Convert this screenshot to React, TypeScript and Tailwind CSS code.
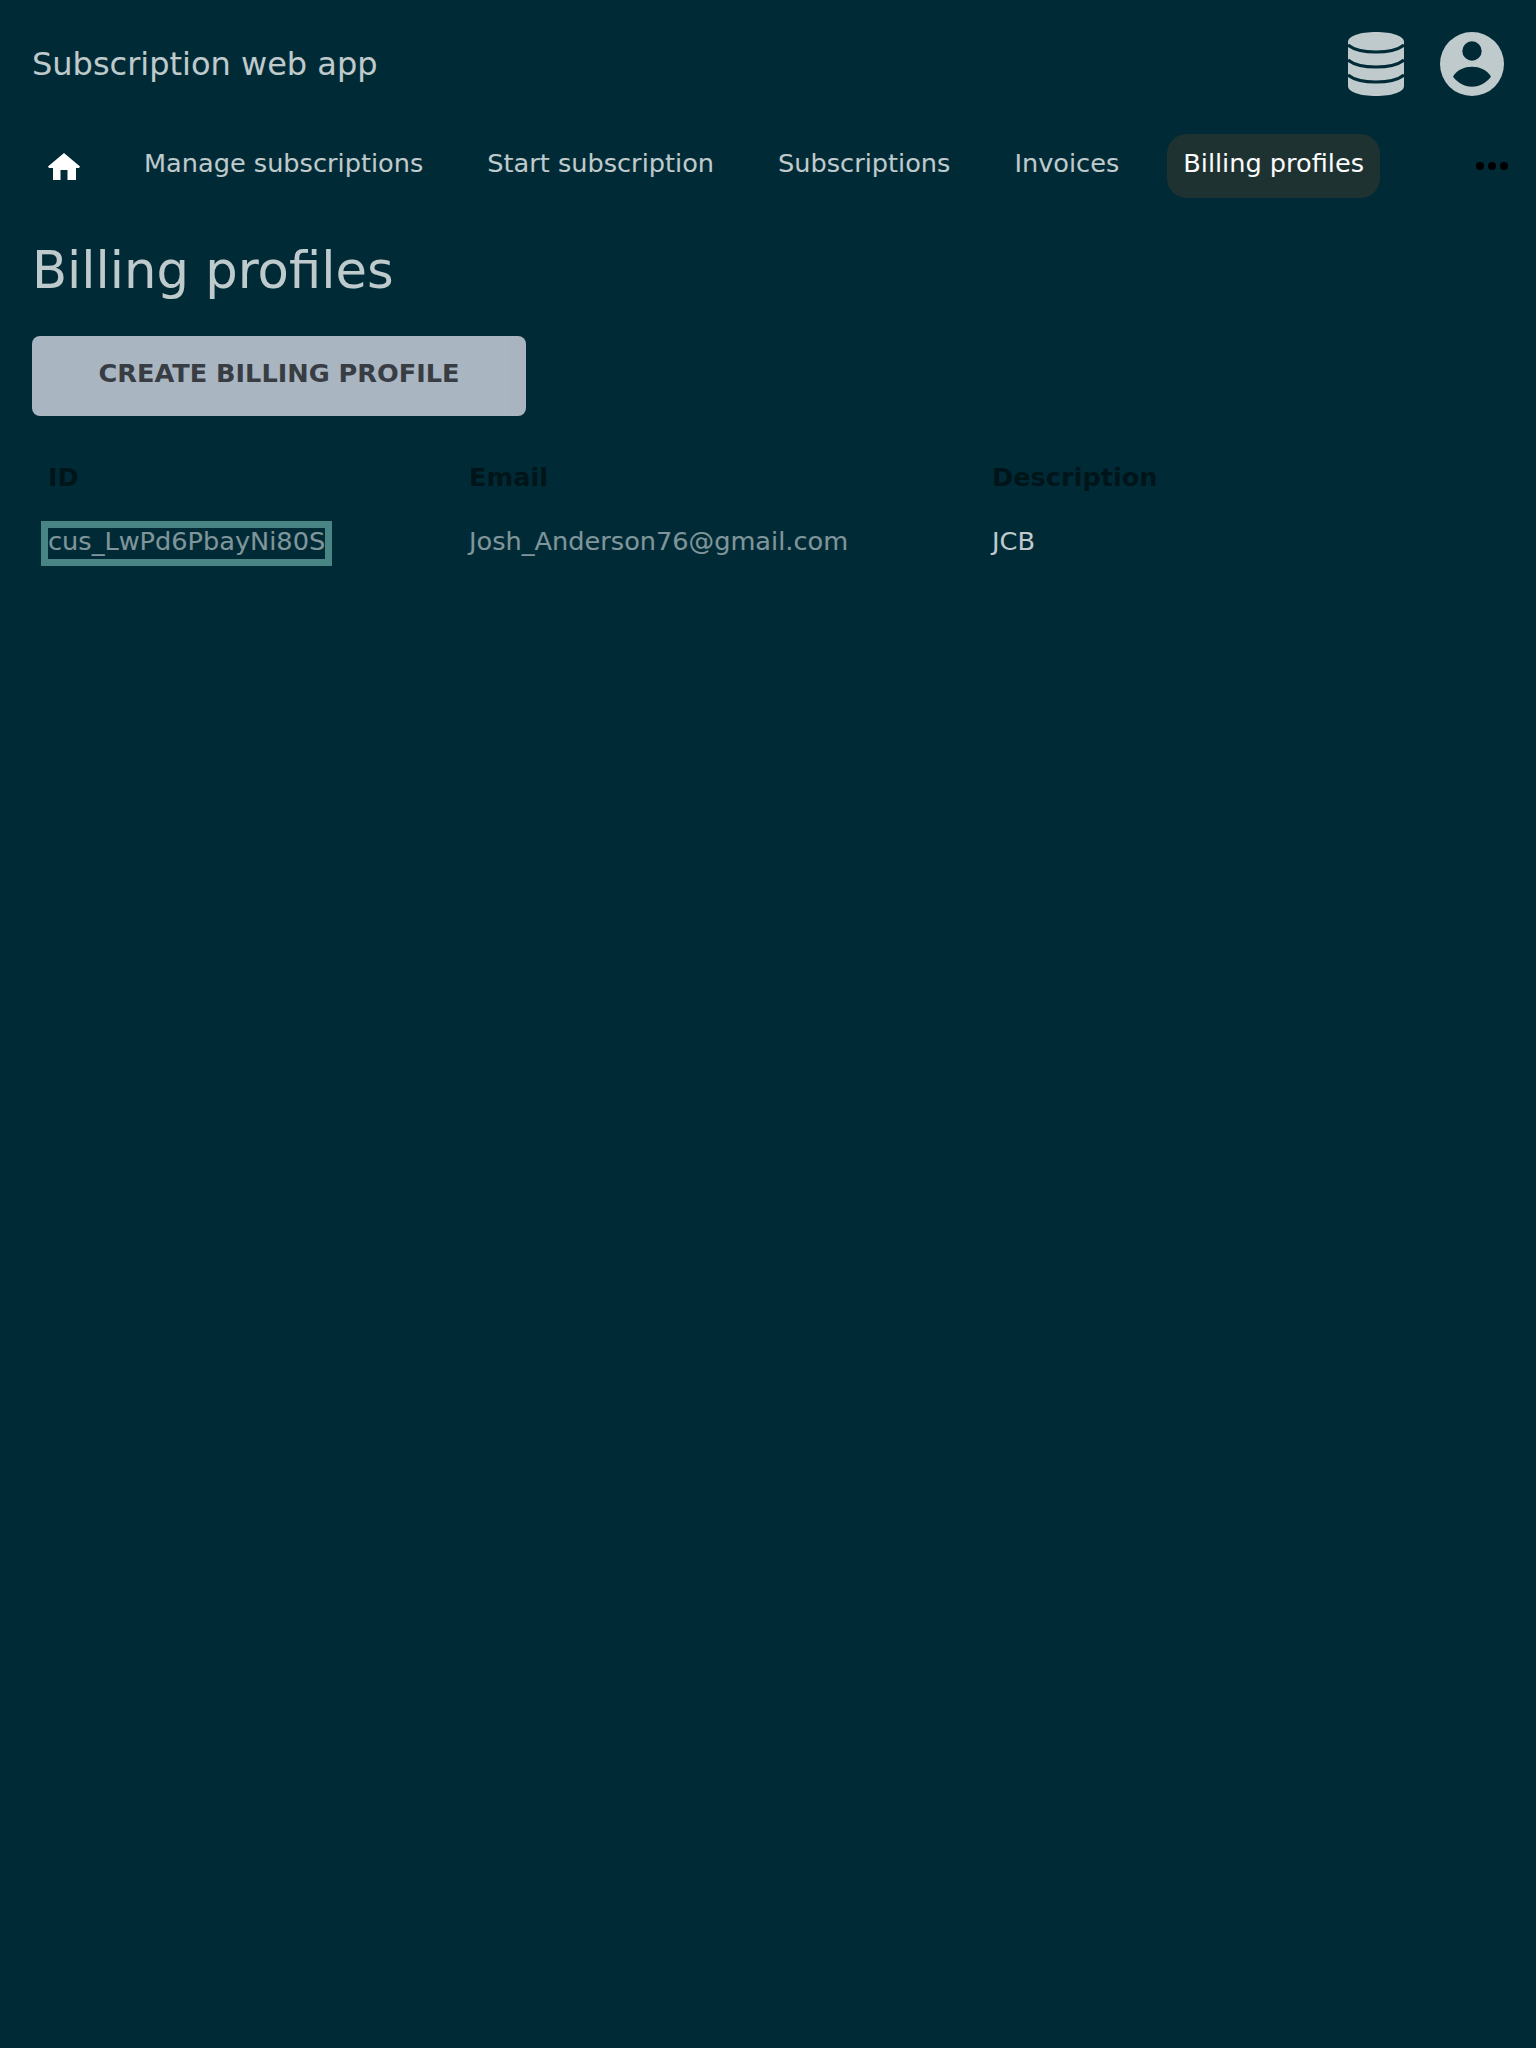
import React from "react";

const navItems = ["Manage subscriptions", "Start subscription", "Subscriptions", "Invoices"];

const HomeIcon = () => (
  <svg viewBox="0 0 32 27" className="w-8 h-[27px] fill-white">
    <path d="M16 0 L32 13.500 L31 15 H28 V27 H19.500 V17 H12.500 V27 H5 V15 H1 L0 13.500 Z" />
  </svg>
);

const DatabaseIcon = () => (
  <svg viewBox="0 0 56 64" className="w-14 h-16">
    <path fill="#bfcacc" d="M0 10C0 4 12 0 28 0s28 4 28 10v44c0 6-12 10-28 10S0 60 0 54Z" />
    <g fill="none" stroke="#002b36" strokeWidth="3">
      <path d="M0 13c6 5 16 7 28 7s22-2 28-7" />
      <path d="M0 28c6 5 16 7 28 7s22-2 28-7" />
      <path d="M0 43c6 5 16 7 28 7s22-2 28-7" />
    </g>
  </svg>
);

const PersonIcon = () => (
  <svg viewBox="0 0 64 64" className="w-16 h-16">
    <path
      fill="#bfcacc"
      fillRule="evenodd"
      d="M32 0a32 32 0 1 0 0 64a32 32 0 1 0 0-64ZM32 9.300a9.700 9.700 0 1 1 0 19.400a9.700 9.700 0 1 1 0-19.400ZM13 44.500C17 38 24 34.700 32 34.700s15 3.300 19 9.800C47 50.500 40 54.700 32 54.700s-15-4.200-19-10.200Z"
    />
  </svg>
);

export default function App() {
  return (
    <div className="min-h-[2048px] bg-[#002b36] text-white font-['DejaVu_Sans',sans-serif]">
      <header className="flex items-center justify-between h-[128px] px-8">
        <h2 className="text-[32px] opacity-75">Subscription web app</h2>
        <div className="flex items-center gap-9">
          <DatabaseIcon />
          <PersonIcon />
        </div>
      </header>

      <nav className="flex items-center h-[76px] pl-12 pr-7">
        <HomeIcon />
        <ul className="flex items-center gap-8 ml-12">
          {navItems.map((item) => (
            <li key={item} className="px-4 pt-[13px] pb-[19px] text-[25.6px] leading-8">
              <span className="opacity-75">{item}</span>
            </li>
          ))}
          <li className="px-4 pt-[13px] pb-[19px] text-[25.6px] leading-8 rounded-[20px] bg-[#1f3232]">
            <span className="opacity-[.99]">Billing profiles</span>
          </li>
        </ul>
        <div className="flex gap-1 ml-auto">
          <span className="w-2 h-2 rounded-full bg-black" />
          <span className="w-2 h-2 rounded-full bg-black" />
          <span className="w-2 h-2 rounded-full bg-black" />
        </div>
      </nav>

      <main className="px-8">
        <h1 className="text-[51.2px] leading-[60px] mt-9 opacity-75">Billing profiles</h1>
        <button className="block w-[494px] h-20 mt-9 pb-[5px] rounded-lg bg-[#f1f0fb] text-[#51454b] text-[25.6px] font-bold opacity-70">
          CREATE BILLING PROFILE
        </button>
        <table className="mt-[26px] text-[25.6px] text-left table-fixed w-[1472px]">
          <thead>
            <tr className="text-black">
              <th className="w-[421px] px-4 py-4 font-bold">
                <span className="opacity-50">ID</span>
              </th>
              <th className="w-[523px] px-4 py-4 font-bold">
                <span className="opacity-50">Email</span>
              </th>
              <th className="px-4 py-4 font-bold">
                <span className="opacity-50">Description</span>
              </th>
            </tr>
          </thead>
          <tbody>
            <tr>
              <td className="px-4 py-[10px] align-baseline">
                <a className="inline-block h-[31px] leading-[27px] opacity-50 outline-[7px] outline-[#94dfd4]">
                  cus_LwPd6PbayNi80S
                </a>
              </td>
              <td className="px-4 py-[10px] align-baseline">
                <span className="opacity-50">Josh_Anderson76@gmail.com</span>
              </td>
              <td className="px-4 py-[10px] align-baseline">
                <span className="opacity-75">JCB</span>
              </td>
            </tr>
          </tbody>
        </table>
      </main>
    </div>
  );
}
